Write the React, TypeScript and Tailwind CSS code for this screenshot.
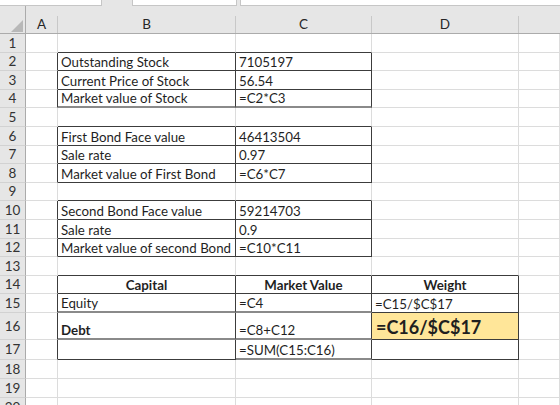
import React from 'react';

type Cell = { text?: string; bold?: boolean; center?: boolean; big?: boolean; fill?: boolean };

const widths = ['w-[32px]', 'w-[178px]', 'w-[136px]', 'w-[147px]', 'flex-1'];
const heights = ['h-[19px]', 'h-[18px]', 'h-[19px]', 'h-[18px]', 'h-[19px]', 'h-[19px]', 'h-[18px]', 'h-[19px]', 'h-[18px]', 'h-[19px]', 'h-[19px]', 'h-[18px]', 'h-[19px]', 'h-[18px]', 'h-[19px]', 'h-[27px]', 'h-[20px]', 'h-[19px]', 'h-[19px]', 'h-[19px]'];

const rightCls: Record<string, string> = {
  g: 'border-r border-r-[#dcdcdc]',
  d: 'border-r border-r-[#3c3c3c]',
};
const bottomCls: Record<string, string> = {
  g: 'border-b border-b-[#dcdcdc]',
  d: 'border-b border-b-[#3c3c3c]',
  t: 'border-b-2 border-b-[#8a8a8a]',
};

const data: Record<number, Cell[]> = {
  2: [{}, { text: 'Outstanding Stock' }, { text: '7105197' }],
  3: [{}, { text: 'Current Price of Stock' }, { text: '56.54' }],
  4: [{}, { text: 'Market value of Stock' }, { text: '=C2*C3' }],
  6: [{}, { text: 'First Bond Face value' }, { text: '46413504' }],
  7: [{}, { text: 'Sale rate' }, { text: '0.97' }],
  8: [{}, { text: 'Market value of First Bond' }, { text: '=C6*C7' }],
  10: [{}, { text: 'Second Bond Face value' }, { text: '59214703' }],
  11: [{}, { text: 'Sale rate' }, { text: '0.9' }],
  12: [{}, { text: 'Market value of second Bond' }, { text: '=C10*C11' }],
  14: [{}, { text: 'Capital', bold: true, center: true }, { text: 'Market Value', bold: true, center: true }, { text: 'Weight', bold: true, center: true }],
  15: [{}, { text: 'Equity' }, { text: '=C4' }, { text: '=C15/$C$17' }],
  16: [{}, { text: 'Debt', bold: true }, { text: '=C8+C12' }, { text: '=C16/$C$17', big: true, fill: true }],
  17: [{}, {}, { text: '=SUM(C15:C16)' }, {}],
};

const small = [2, 3, 4, 6, 7, 8, 10, 11, 12];
const bigTable = [14, 15, 16, 17];

function right(row: number, col: number) {
  if (small.includes(row) && col <= 2) return 'd';
  if (bigTable.includes(row) && col <= 3) return 'd';
  return 'g';
}

function bottom(row: number, col: number) {
  if ([1, 5, 9, 2, 3, 6, 7, 8, 10, 11, 12].includes(row) && (col === 1 || col === 2)) return 'd';
  if (row === 4 && (col === 1 || col === 2)) return 't';
  if ((row === 13 || row === 14) && col >= 1 && col <= 3) return 'd';
  if ((row === 15 || row === 16) && (col === 1 || col === 2)) return 't';
  if ((row === 15 || row === 16) && col === 3) return 'd';
  if (row === 17 && (col === 1 || col === 3)) return 'd';
  if (row === 17 && col === 2) return 't';
  return 'g';
}

function Corner() {
  return (
    <div className="w-[26px] h-full border-r border-r-[#ababab] relative">
      <svg width="26" height="28" className="absolute left-0 top-0">
        <polygon points="23,14 23,26 11,26" fill="#b8b8b8" />
      </svg>
    </div>
  );
}

export default function App() {
  const rows = Array.from({ length: 20 }, (_, i) => i + 1);
  return (
    <div className="w-[560px] h-[405px] overflow-hidden bg-white text-[#1f1f1f] font-['Lato','Liberation_Sans',sans-serif]">
      {/* formula bar strip */}
      <div className="h-[6px] flex bg-[#e6e6e6]">
        <div className="w-[102px] bg-white border-r border-b border-[#c6c6c6]" />
        <div className="w-[30px]" />
        <div className="w-[105px] bg-white border-x border-b border-[#c6c6c6]" />
        <div className="w-[3px]" />
        <div className="flex-1 bg-white border-l border-b border-[#c6c6c6]" />
      </div>

      {/* column headers */}
      <div className="h-[28px] flex bg-[#e6e6e6] border-b border-b-[#ababab]">
        <Corner />
        {['A', 'B', 'C', 'D', ''].map((c, i) => (
          <div key={i} className={`${widths[i]} h-full flex items-end`}>
            <div className={`w-full h-[17px] flex items-center justify-center text-[13.5px] text-[#262626] ${i < 4 ? 'border-r border-r-[#c8c8c8]' : ''}`}>
              {c}
            </div>
          </div>
        ))}
      </div>

      {rows.map((r) => {
        const cells = data[r] || [];
        return (
          <div key={r} className={`${heights[r - 1]} flex`}>
            <div className="w-[26px] bg-[#e6e6e6] border-r border-r-[#ababab] border-b border-b-[#d2d2d2] flex items-center justify-center text-[13.5px] text-[#333]">
              {r}
            </div>
            {widths.map((w, c) => {
              const cell = cells[c] || {};
              return (
                <div
                  key={c}
                  className={`${w} ${rightCls[right(r, c)]} ${bottomCls[bottom(r, c)]} flex items-end overflow-hidden whitespace-nowrap ${cell.center ? 'justify-center' : 'pl-[3px]'} ${cell.fill ? 'bg-[#ffe699]' : ''}`}
                >
                  {cell.text && (
                    <span
                      className={`${cell.big ? 'text-[18px] font-bold leading-[24px] pl-[1px]' : 'text-[13.3px] leading-[16px]'} ${cell.bold ? 'font-bold' : ''} text-[#1f1f1f]`}
                    >
                      {cell.text}
                    </span>
                  )}
                </div>
              );
            })}
          </div>
        );
      })}
    </div>
  );
}
